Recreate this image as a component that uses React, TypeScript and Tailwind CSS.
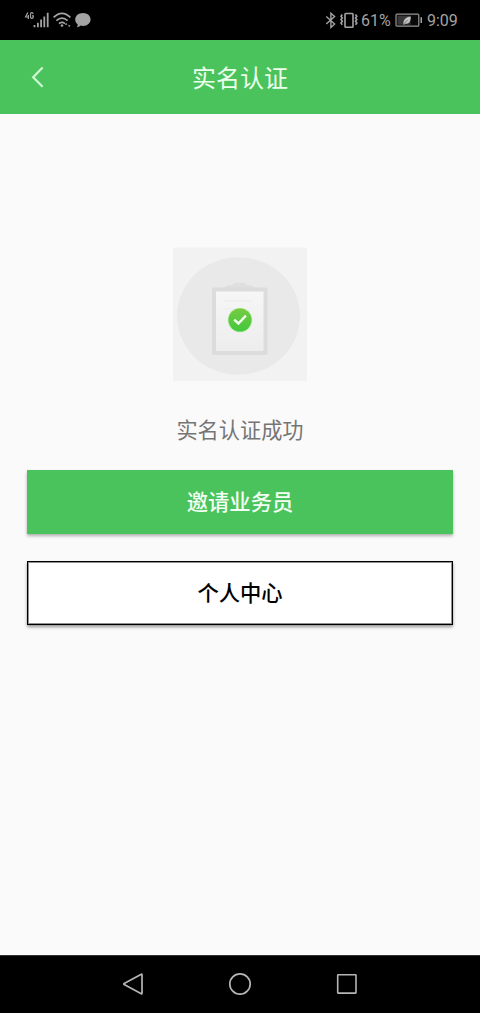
import React from "react";

function StatusBar() {
  return (
    <div className="flex h-10 items-center justify-between bg-black pr-[22px] pl-6 text-[#a3a3a3]">
      <div className="flex items-center">
        <svg className="h-5 w-[26px]" viewBox="0 0 26 20" fill="currentColor">
          <path d="M3.800 2.400 1.600 7H5M4.300 5v4M9.200 4C9 3 8.400 2.700 7.900 2.700c-.9 0-1.400.7-1.400 1.600v2.400c0 1 .5 1.700 1.400 1.700s1.400-.7 1.400-1.700V5.900H8" fill="none" stroke="currentColor" strokeWidth="1.200" />
          <path d="M9.600 15h1.800v2.200H9.600zM13 12.700h1.800v4.500H13zM16.200 9.500H18v7.700h-1.800zM19.400 6.400h1.800v10.800h-1.800zM22.800 2.800h1.800v14.400h-1.800z" />
        </svg>
        <svg className="ml-[2px] h-5 w-5" viewBox="0 0 20 20" fill="none" stroke="currentColor" strokeWidth="1.700">
          <path d="M1.600 7.400Q10-.8 18.400 7.400M4.400 10.700Q10 5.500 15.600 10.700M7 13.700q3-2.500 6 0" />
          <path d="m10 14 1.600 1.600L10 17.300l-1.600-1.700z" fill="currentColor" stroke="none" />
          <path d="m14.200 12.800 1.300 2h-2.600zM17.200 17.300l-1.300-2h2.600z" fill="currentColor" stroke="none" />
        </svg>
        <svg className="ml-[2px] h-5 w-[18px]" viewBox="0 0 18 20" fill="currentColor">
          <path d="M9 3c4.300 0 7.600 2.800 7.600 6.600 0 3.600-3.300 6.400-7.400 6.400-.9 0-1.800-.1-2.600-.4-1 1-2.300 1.700-3.800 1.800.6-.9.9-1.900.9-3C2 13.200 1.200 11.500 1.200 9.600 1.200 5.800 4.700 3 9 3z" />
        </svg>
      </div>
      <div className="flex items-center">
        <svg className="h-5 w-3" viewBox="0 0 12 20" fill="none" stroke="currentColor" strokeWidth="1.400">
          <path d="m1.300 6.500 8.300 7.500-3.700 3.400V3.200l3.700 3.300L1.300 14" />
        </svg>
        <svg className="ml-[2px] h-5 w-5" viewBox="0 0 20 20" fill="none" stroke="currentColor" strokeWidth="1.600">
          <rect x="6" y="3.500" width="8" height="13.700" rx=".7" />
          <path d="m3.300 4.500-1.300 1.700 1.300 1.700L2 9.600l1.300 1.700L2 13l1.300 1.700M16.500 4.500l1.300 1.700-1.300 1.700 1.300 1.700-1.300 1.700 1.300 1.700-1.300 1.700" />
        </svg>
        <span className="ml-[2px] w-[31px] pt-[2px] text-[16px] leading-5">61%</span>
        <svg className="ml-[3px] h-5 w-7" viewBox="0 0 28 20">
          <rect x="1" y="4.200" width="22.800" height="12" rx="1" fill="#090909" stroke="#969696" strokeWidth="1.200" />
          <path d="M2.500 5.700h13v9h-13z" fill="#383838" />
          <path d="M8.400 14.400c-.2-4.600 2.200-7.600 7.300-8 .3 4.900-1.700 7.600-5.500 7.300l-1.100 1z" fill="#c4c4c4" />
          <path d="m9.200 13.700 3.400-3.800" stroke="#555" strokeWidth=".7" />
          <path d="M25.500 7.300H27v5.600h-1.500z" fill="#a3a3a3" />
        </svg>
        <span className="ml-[4px] w-[31px] pt-[2px] text-[16px] leading-5">9:09</span>
      </div>
    </div>
  );
}

function Header() {
  return (
    <header className="grid h-[74.400px] grid-cols-[72px_1fr_72px] items-center bg-[#4bc35c] text-[#ecffec]">
      <button className="ml-[30px] w-4" aria-label="返回">
        <svg className="h-6 w-4" viewBox="0 0 16 24" fill="none" stroke="#cff8d3" strokeWidth="2.200">
          <path d="m12.600 2.500-9.400 9.700 9.400 9.600" />
        </svg>
      </button>
      <h1 className="pt-[4px] text-center text-[24px] leading-8">实名认证</h1>
    </header>
  );
}

function SuccessImage() {
  return (
    <svg className="h-[134px] w-[134px]" viewBox="0 0 134 134">
      <defs>
        <linearGradient id="check" x1="0" y1="0" x2="0" y2="1">
          <stop stopColor="#76cb43" />
          <stop offset="1" stopColor="#42c83c" />
        </linearGradient>
        <linearGradient id="paper" x1="0" y1="0" x2="0" y2="1">
          <stop stopColor="#f6f6f6" />
          <stop offset="1" stopColor="#ededed" />
        </linearGradient>
        <filter id="soften"><feGaussianBlur stdDeviation=".7" /></filter>
      </defs>
      <path d="M0 .5h134V134H0z" fill="#f2f2f2" />
      <g filter="url(#soften)">
        <ellipse cx="65.500" cy="69" rx="61.500" ry="58.700" fill="#e9e9e9" />
        <path d="M51 41q1-2.500 8-3 1.500-2.500 7.500-2.500t7.500 2.500q7 .5 8 3z" fill="#dfdfdf" />
        <rect x="39" y="40.500" width="55.500" height="67.500" rx="2" fill="#dcdcdc" />
        <rect x="43" y="44.500" width="47.500" height="59.500" fill="url(#paper)" />
        <path d="M51 54h28M51 62h13" stroke="#f0f0f0" strokeWidth="2" />
      </g>
      <circle cx="67" cy="73" r="12.300" fill="#b9edaa" />
      <circle cx="67" cy="73" r="11.500" fill="url(#check)" />
      <path d="m61.200 72.600 4.200 3.900 7.500-7.800" fill="none" stroke="#effcec" strokeWidth="2.500" />
    </svg>
  );
}

function NavigationBar() {
  return (
    <nav className="flex h-[58px] items-center justify-center gap-[83px] border-t border-[#303331] bg-black pb-[2px] text-[#b5b5b5]">
      <svg className="h-6 w-6" viewBox="0 0 24 24" fill="none" stroke="currentColor" strokeWidth="1.700" strokeLinejoin="round">
        <path d="M20.300 2.300q.7-.4.700.4v18.600q0 .8-.7.400L3.200 12.600q-.8-.6 0-1.100z" />
      </svg>
      <svg className="h-6 w-6" viewBox="0 0 24 24" fill="none" stroke="currentColor" strokeWidth="1.700">
        <circle cx="12" cy="12" r="10.200" />
      </svg>
      <svg className="h-6 w-6" viewBox="0 0 24 24" fill="none" stroke="currentColor" strokeWidth="1.600">
        <rect x="2.700" y="2.800" width="18.300" height="18.300" rx=".5" />
      </svg>
    </nav>
  );
}

export default function App() {
  return (
    <div className="flex h-[1013px] w-[480px] flex-col bg-[#fafafa] font-[Roboto,'Noto_Sans_CJK_SC',sans-serif]">
      <StatusBar />
      <Header />
      <main className="flex flex-1 flex-col items-center px-[26.600px] pt-[133px]">
        <SuccessImage />
        <p className="mt-[33.500px] text-[21.200px] leading-8 text-[#757575]">实名认证成功</p>
        <button className="mt-[23px] h-16 w-full bg-[#4bc35c] pt-[3px] text-[21.300px] leading-8 font-medium text-[#f2fff2] shadow-[0_2px_3px_#0000004d]">
          邀请业务员
        </button>
        <button className="mt-[27px] h-16 w-full border border-black bg-white pt-[3px] text-[21.300px] leading-8 font-medium text-black shadow-[inset_0_0_0_1px_#00000070,0_2px_3px_#00000066]">
          个人中心
        </button>
      </main>
      <NavigationBar />
    </div>
  );
}
